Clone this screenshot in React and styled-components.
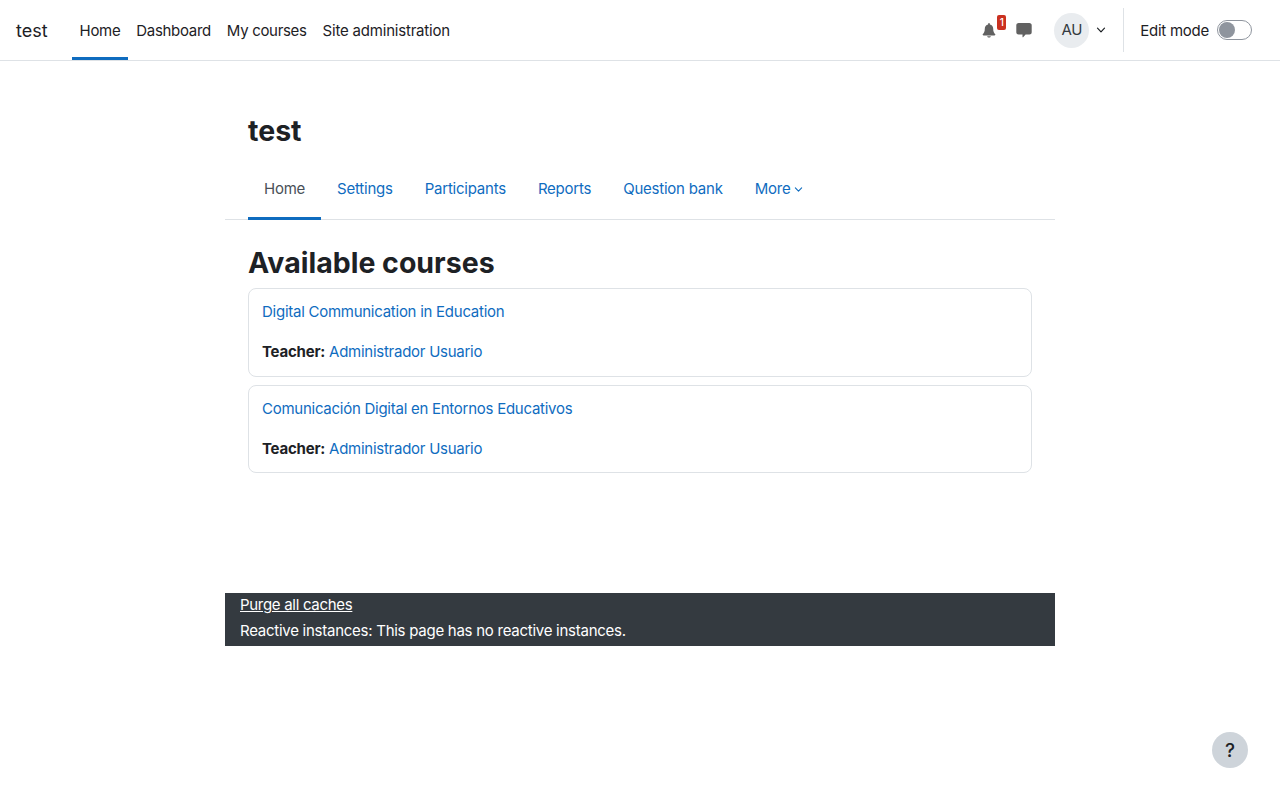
import styled, { createGlobalStyle } from "styled-components";

const GlobalStyle = createGlobalStyle`
  html, body {
    margin: 0;
    padding: 0;
    background: #fff;
  }
  body {
    font-family: Inter, "Liberation Sans", sans-serif;
    font-size: 15px;
    line-height: 1.5;
    letter-spacing: -0.26px;
    color: #1d2125;
  }
  * {
    box-sizing: border-box;
  }
`;

const courses = [
  "Digital Communication in Education",
  "Comunicación Digital en Entornos Educativos",
];

const Chevron = ({ size = 10 }) => (
  <svg width={size} height={size} viewBox="0 0 10 10" fill="none">
    <path d="M1.5 3.2 5 6.8l3.5-3.6" stroke="currentColor" strokeWidth="1.2" strokeLinecap="round" strokeLinejoin="round" />
  </svg>
);

const App = () => {
  return (
    <>
      <GlobalStyle />
      <Navbar>
        <Brand>test</Brand>
        <PrimaryNav>
          <PrimaryLink $active>Home</PrimaryLink>
          <PrimaryLink>Dashboard</PrimaryLink>
          <PrimaryLink>My courses</PrimaryLink>
          <PrimaryLink $wide>Site administration</PrimaryLink>
        </PrimaryNav>
        <NavRight>
          <IconButton>
            <svg width="16" height="16" viewBox="0 0 16 16" fill="#616161">
              <path d="M8 1c-.5 0-.9.4-.9.9v.5C5 2.800 3.800 4.500 3.800 6.700c0 3-.9 4.200-1.900 5.200-.2.200-.3.500-.3.700 0 .5.400.8.900.8h11c.5 0 .9-.3.900-.8 0-.2-.1-.5-.3-.7-1-1-1.900-2.200-1.900-5.200 0-2.200-1.200-3.900-3.300-4.300v-.5C8.900 1.400 8.500 1 8 1z" />
              <path d="M6.200 14.300h3.600c0 .8-.8 1.300-1.800 1.300s-1.800-.5-1.800-1.300z" />
            </svg>
            <Badge>1</Badge>
          </IconButton>
          <IconButton>
            <svg width="16" height="16" viewBox="0 0 16 16" fill="#616161">
              <path d="M2.600 1h10.800c1.300 0 2.300 1 2.300 2.200v7c0 1.300-1 2.300-2.300 2.300H9.600l-2.500 2.700c-.2.200-.6.100-.6-.2v-2.500H2.600C1.300 12.500.3 11.500.3 10.200v-7C.3 2 1.300 1 2.600 1z" />
            </svg>
          </IconButton>
          <UserMenu>
            <Avatar>AU</Avatar>
            <Chevron />
          </UserMenu>
          <EditMode>
            <span>Edit mode</span>
            <Toggle>
              <Knob />
            </Toggle>
          </EditMode>
        </NavRight>
      </Navbar>

      <Page>
        <CourseTitle>test</CourseTitle>
        <Tabs>
          <Tab $active>Home</Tab>
          <Tab>Settings</Tab>
          <Tab>Participants</Tab>
          <Tab>Reports</Tab>
          <Tab>Question bank</Tab>
          <Tab>
            More <Chevron size={9} />
          </Tab>
        </Tabs>
        <Content>
          <SectionTitle>Available courses</SectionTitle>
          <CourseList>
            {courses.map((name) => (
              <CourseCard key={name}>
                <CourseLink>{name}</CourseLink>
                <Teacher>
                  <strong>Teacher:</strong> <CourseLink>Administrador Usuario</CourseLink>
                </Teacher>
              </CourseCard>
            ))}
          </CourseList>
        </Content>
        <DebugFooter>
          <PurgeLink>Purge all caches</PurgeLink>
          <div>Reactive instances: This page has no reactive instances.</div>
        </DebugFooter>
      </Page>

      <HelpButton>?</HelpButton>
    </>
  );
};
export default App;

const Navbar = styled.nav`
  display: flex;
  align-items: stretch;
  height: 61px;
  padding: 0 16px;
  background: #fff;
  border-bottom: 1px solid #dee2e6;
`;

const Brand = styled.div`
  display: flex;
  align-items: center;
  font-size: 18px;
  letter-spacing: 0;
  margin-right: 16px;
  padding-right: 8px;
`;

const PrimaryNav = styled.div`
  display: flex;
  align-items: stretch;
`;

const PrimaryLink = styled.a`
  display: flex;
  align-items: center;
  padding: 2px 8px 0;
  margin-bottom: -1px;
  height: 60px;
  letter-spacing: ${(p) => (p.$wide ? "-0.2px" : "-0.32px")};
  color: #1d2125;
  border-bottom: 3px solid ${(p) => (p.$active ? "#0f6cbf" : "transparent")};
  border-top: 3px solid transparent;
`;

const NavRight = styled.div`
  display: flex;
  align-items: center;
  margin-left: auto;
  padding-right: 12px;
`;

const IconButton = styled.div`
  position: relative;
  display: flex;
  align-items: center;
  justify-content: center;
  width: 16px;
  height: 16px;
  margin-right: 19px;
  &:nth-child(2) {
    margin-right: 22px;
  }
`;

const Badge = styled.span`
  position: absolute;
  top: -7px;
  left: 16px;
  width: 9px;
  height: 15px;
  border-radius: 2px;
  background: #ca3120;
  color: #fff;
  font-size: 10px;
  font-weight: 500;
  letter-spacing: 0;
  line-height: 15px;
  text-align: center;
`;

const UserMenu = styled.div`
  display: flex;
  align-items: center;
  gap: 7px;
  color: #1d2125;
  padding-right: 17px;
  border-right: 1px solid #dee2e6;
  height: 44px;
`;

const Avatar = styled.div`
  display: flex;
  align-items: center;
  justify-content: center;
  padding-top: 1px;
  width: 35px;
  height: 35px;
  border-radius: 50%;
  background: #e9ecef;
  color: #343a40;
  font-size: 15px;
`;

const EditMode = styled.div`
  display: flex;
  align-items: center;
  gap: 8px;
  margin-left: 16px;
  span {
    padding-top: 2px;
  }
`;

const Toggle = styled.div`
  width: 35px;
  height: 20px;
  padding: 1px;
  border: 1px solid #8f959e;
  border-radius: 10px;
  background: #fff;
`;

const Knob = styled.div`
  width: 16px;
  height: 16px;
  border-radius: 50%;
  background: #8f959e;
`;

const Page = styled.main`
  width: 830px;
  margin: 0 auto;
`;

const CourseTitle = styled.h1`
  margin: 0;
  padding: 53px 23px 0;
  font-size: 28.5px;
  font-weight: 700;
  letter-spacing: 0;
  line-height: 34px;
`;

const Tabs = styled.div`
  display: flex;
  align-items: stretch;
  height: 60px;
  margin-top: 12px;
  padding: 0 23px;
  border-bottom: 1px solid #dee2e6;
`;

const Tab = styled.a`
  display: flex;
  align-items: center;
  gap: 4px;
  padding: 2px 16px 0;
  height: 60px;
  letter-spacing: -0.23px;
  color: ${(p) => (p.$active ? "#495057" : "#0f6cbf")};
  border-bottom: 3px solid ${(p) => (p.$active ? "#0f6cbf" : "transparent")};
  margin-bottom: -1px;
`;

const Content = styled.section`
  padding: 0 23px;
`;

const SectionTitle = styled.h2`
  margin: 25px 0 7px;
  font-size: 28.5px;
  font-weight: 700;
  letter-spacing: 0;
  line-height: 36px;
`;

const CourseList = styled.div`
  display: flex;
  flex-direction: column;
  gap: 8px;
`;

const CourseCard = styled.div`
  display: flex;
  flex-direction: column;
  gap: 17.5px;
  padding: 12px 13px;
  border: 1px solid #dee2e6;
  border-radius: 8px;
`;

const CourseLink = styled.a`
  color: #0f6cbf;
`;

const Teacher = styled.div`
  strong {
    font-weight: 700;
    letter-spacing: -0.22px;
  }
`;

const DebugFooter = styled.footer`
  margin-top: 120px;
  padding: 0 15px;
  height: 53px;
  background: #343a40;
  color: #fff;
  line-height: 24px;
  div {
    margin-top: 2px;
  }
`;

const PurgeLink = styled.a`
  color: #fff;
  text-decoration: underline;
  letter-spacing: -0.3px;
  display: block;
`;

const HelpButton = styled.button`
  position: fixed;
  right: 32px;
  bottom: 32px;
  width: 36px;
  height: 36px;
  border: 0;
  border-radius: 50%;
  background: #ced4da;
  color: #1d2125;
  font-family: inherit;
  font-size: 19px;
  font-weight: 500;
  padding: 0;
`;
